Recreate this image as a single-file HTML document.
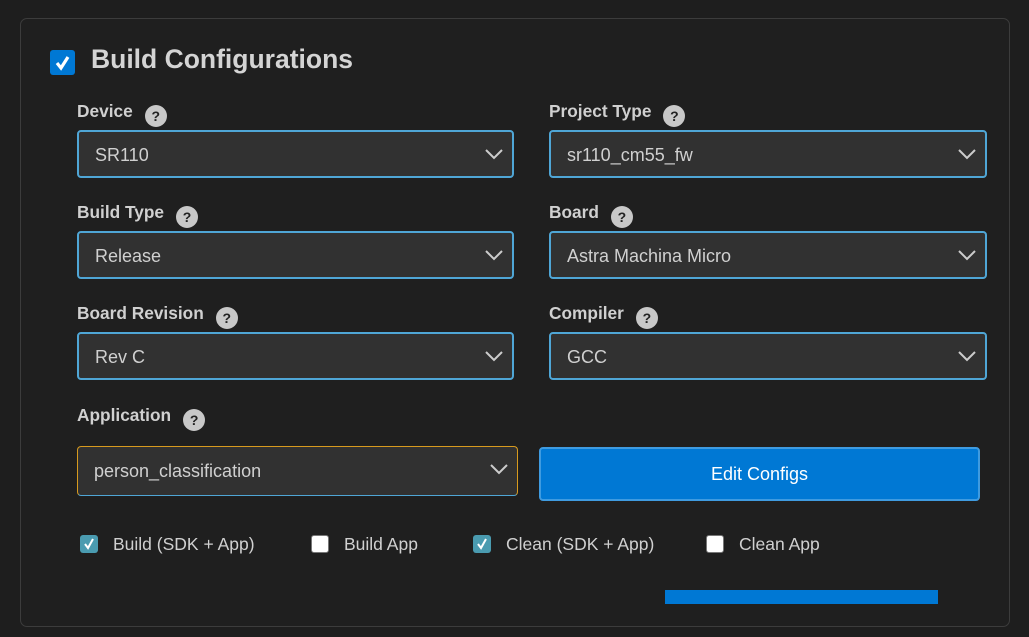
<!DOCTYPE html>
<html><head><style>
*{box-sizing:border-box;margin:0;padding:0}
body{width:1029px;height:637px;background:#1e1e1e;font-family:"Liberation Sans",sans-serif;position:relative;overflow:hidden;color:#ccc}
.panel{position:absolute;left:20px;top:18px;width:990px;height:609px;border:1px solid #3c3c3c;border-radius:7px;background:#1f1f1f}
.abs{position:absolute}
.title{left:91px;top:44px;font-size:26.5px;font-weight:bold;color:#d4d4d4}
.cb{left:50px;top:50px;width:25px;height:25px;background:#0078d4;border-radius:3px}
.lbl{font-size:17.3px;font-weight:bold;color:#d0d0d0}
.q{display:inline-block;width:22px;height:22px;border-radius:50%;background:#c8c8c8;color:#222;font-size:14px;text-align:center;line-height:22px;margin-left:12px;vertical-align:-4px;font-weight:bold}
.sel{height:48px;border:2px solid #4fa6d6;border-radius:4px;background:#313131;color:#d0d0d0;font-size:18px;padding:13px 0 0 16px}
.sel svg{position:absolute;right:8px;top:15px}
.btn{background:#0078d4;border:2px solid #3f9be0;border-radius:4px;color:#fff;font-size:18px;text-align:center;line-height:48px}
.ck{font-size:17.5px;color:#d0d0d0;top:534px}
.box{display:inline-block;width:18px;height:18px;border-radius:3px;vertical-align:-3px;margin-right:15px;position:relative}
.on{background:#4a9bb0}
.off{background:#fff;border:1px solid #777}
</style></head><body>
<div class="panel"></div>
<div class="abs cb"><svg width="25" height="25"><path d="M7 13 L11 18 L18 7" stroke="#fff" stroke-width="3.2" fill="none"/></svg></div>
<div class="abs title">Build Configurations</div>

<div class="abs lbl" style="left:77px;top:101px">Device<span class="q">?</span></div>
<div class="abs sel" style="left:77px;top:130px;width:437px">SR110<svg width="20" height="14"><path d="M2 3 L10 11 L18 3" stroke="#ccc" stroke-width="2" fill="none"/></svg></div>
<div class="abs lbl" style="left:549px;top:101px">Project Type<span class="q">?</span></div>
<div class="abs sel" style="left:549px;top:130px;width:438px">sr110_cm55_fw<svg width="20" height="14"><path d="M2 3 L10 11 L18 3" stroke="#ccc" stroke-width="2" fill="none"/></svg></div>

<div class="abs lbl" style="left:77px;top:202px">Build Type<span class="q">?</span></div>
<div class="abs sel" style="left:77px;top:231px;width:437px">Release<svg width="20" height="14"><path d="M2 3 L10 11 L18 3" stroke="#ccc" stroke-width="2" fill="none"/></svg></div>
<div class="abs lbl" style="left:549px;top:202px">Board<span class="q">?</span></div>
<div class="abs sel" style="left:549px;top:231px;width:438px">Astra Machina Micro<svg width="20" height="14"><path d="M2 3 L10 11 L18 3" stroke="#ccc" stroke-width="2" fill="none"/></svg></div>

<div class="abs lbl" style="left:77px;top:303px">Board Revision<span class="q">?</span></div>
<div class="abs sel" style="left:77px;top:332px;width:437px">Rev C<svg width="20" height="14"><path d="M2 3 L10 11 L18 3" stroke="#ccc" stroke-width="2" fill="none"/></svg></div>
<div class="abs lbl" style="left:549px;top:303px">Compiler<span class="q">?</span></div>
<div class="abs sel" style="left:549px;top:332px;width:438px">GCC<svg width="20" height="14"><path d="M2 3 L10 11 L18 3" stroke="#ccc" stroke-width="2" fill="none"/></svg></div>

<div class="abs lbl" style="left:77px;top:405px">Application<span class="q">?</span></div>
<div class="abs sel" style="left:77px;top:446px;width:441px;height:50px;border:1px solid #d79a1e;border-bottom-color:#4fa6d6;padding-top:14px">person_classification<svg width="20" height="14"><path d="M2 3 L10 11 L18 3" stroke="#ccc" stroke-width="2" fill="none"/></svg></div>
<div class="abs btn" style="left:539px;top:447px;width:441px;height:54px;line-height:50px">Edit Configs</div>

<div class="abs ck" style="left:80px"><span class="box on"><svg width="18" height="18" style="position:absolute;left:0;top:0"><path d="M5 9 L8 13 L13 4" stroke="#fff" stroke-width="2" fill="none"/></svg></span>Build (SDK + App)</div>
<div class="abs ck" style="left:311px"><span class="box off"></span>Build App</div>
<div class="abs ck" style="left:473px"><span class="box on"><svg width="18" height="18" style="position:absolute;left:0;top:0"><path d="M5 9 L8 13 L13 4" stroke="#fff" stroke-width="2" fill="none"/></svg></span>Clean (SDK + App)</div>
<div class="abs ck" style="left:706px"><span class="box off"></span>Clean App</div>

<div class="abs" style="left:665px;top:590px;width:273px;height:14px;background:#0078d4"></div>
</body></html>
